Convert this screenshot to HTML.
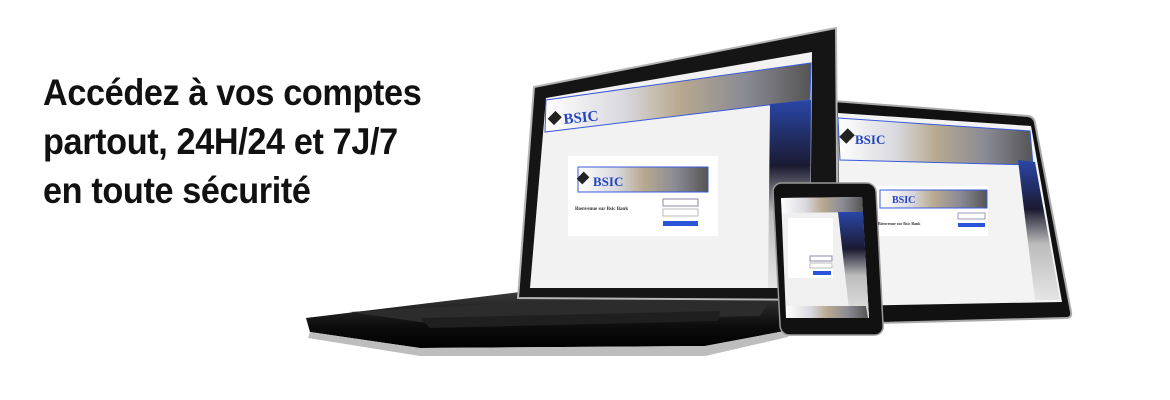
<!DOCTYPE html>
<html><head><meta charset="utf-8"><style>
html,body{margin:0;padding:0;background:#fff;width:1170px;height:400px;overflow:hidden}
h1{position:absolute;left:43px;top:68px;margin:0;font-family:"Liberation Sans",Arial,sans-serif;font-weight:bold;font-size:37px;line-height:49px;color:#111;letter-spacing:-0.4px;transform:scaleX(0.925);transform-origin:0 0;white-space:nowrap}
svg{position:absolute;left:0;top:0}
svg text{font-family:"Liberation Serif",serif;font-weight:bold}
</style></head><body>
<h1>Accédez à vos comptes<br>partout, 24H/24 et 7J/7<br>en toute sécurité</h1>
<svg width="1170" height="400" viewBox="0 0 1170 400">
<defs>
<linearGradient id="base" x1="0" y1="0" x2="0" y2="1"><stop offset="0" stop-color="#3a3a3a"/><stop offset="0.6" stop-color="#0d0d0d"/><stop offset="1" stop-color="#000"/></linearGradient>
<linearGradient id="ban" x1="0" y1="0" x2="1" y2="0"><stop offset="0" stop-color="#fff"/><stop offset="0.3" stop-color="#d8d8de"/><stop offset="0.5" stop-color="#b9aa90"/><stop offset="0.75" stop-color="#8b8b95"/><stop offset="1" stop-color="#555"/></linearGradient>
<linearGradient id="side" x1="0" y1="0" x2="0" y2="1"><stop offset="0" stop-color="#2a46a8"/><stop offset="0.35" stop-color="#1a1a30"/><stop offset="0.6" stop-color="#bcbcbc"/><stop offset="1" stop-color="#e5e5e5"/></linearGradient>
</defs>
<!-- tablet -->
<path d="M833,101 L1028,116 Q1034,117 1035,123 L1071,312 Q1072,318 1066,318 L842,324 Q836,324 836,318 Z" fill="#111" stroke="#aaa" stroke-width="2"/>
<polygon points="838,113 1031,126 1062,302 840,306" fill="#f3f3f3"/>
<polygon points="838,118 1030,131 1033,165 840,160" fill="url(#ban)" stroke="#3a5ad8" stroke-width="1"/>
<polygon points="1018,160 1035,162 1060,300 1035,300" fill="url(#side)"/>
<text x="855" y="144" font-size="13" fill="#2244c0">BSIC</text>
<rect x="842" y="130" width="10" height="12" fill="#222" transform="rotate(45 847 136)"/>
<rect x="876" y="186" width="112" height="50" fill="#fff"/>
<rect x="880" y="190" width="107" height="18" fill="url(#ban)" stroke="#3a5ad8"/>
<text x="892" y="203" font-size="10" fill="#2244c0">BSIC</text>
<rect x="958" y="223" width="27" height="4" fill="#2a55d8"/>
<rect x="958" y="213" width="27" height="6" fill="#fff" stroke="#99b"/>
<text x="878" y="225" font-size="4" fill="#333">Bienvenue sur Bsic Bank</text>
<!-- laptop base -->
<polygon points="306,318 520,292 830,292 790,330 705,346 420,348 310,332" fill="url(#base)"/>
<polygon points="310,332 420,348 705,346 790,330 788,337 705,356 420,356 308,338" fill="#bdbdbd"/>
<polygon points="350,312 560,300 770,300 760,316 420,322" fill="#2c2c2c"/>
<polygon points="420,318 720,311 718,321 430,328" fill="#1f1f1f"/>
<!-- laptop lid -->
<polygon points="534,87 836,28 838,300 518,298" fill="#151515" stroke="#b5b5b5" stroke-width="2"/>
<polygon points="546,98 812,52 810,288 530,288" fill="#f2f2f2"/>
<polygon points="546,100 811,63 810,100 545,132" fill="url(#ban)" stroke="#3a5ad8" stroke-width="1"/>
<polygon points="770,104 811,100 810,288 768,288" fill="url(#side)"/>
<text x="564" y="124" font-size="15" fill="#2244c0" transform="rotate(-6 564 124)">BSIC</text>
<rect x="550" y="112" width="9" height="11" fill="#222" transform="rotate(45 554 118)"/>
<rect x="568" y="156" width="150" height="80" fill="#fff"/>
<rect x="578" y="167" width="130" height="25" fill="url(#ban)" stroke="#3a5ad8"/>
<text x="593" y="186" font-size="13" fill="#2244c0">BSIC</text>
<rect x="579" y="173" width="8" height="10" fill="#222" transform="rotate(45 583 178)"/>
<text x="575" y="210" font-size="5" fill="#333">Bienvenue sur Bsic Bank</text>
<rect x="663" y="199" width="35" height="7" fill="#fff" stroke="#88a"/>
<rect x="663" y="209" width="35" height="7" fill="#fff" stroke="#bbb"/>
<rect x="663" y="221" width="35" height="5" fill="#2a55d8"/>
<!-- phone -->
<rect x="775" y="183" width="103" height="152" rx="9" fill="#111" stroke="#999" stroke-width="1.5" transform="skewX(3) translate(-12 0)"/>
<polygon points="781,198 862,197 869,318 786,318" fill="#f0f0f0"/>
<polygon points="781,198 862,197 863,212 782,213" fill="url(#ban)"/>
<polygon points="838,212 863,212 869,318 850,318" fill="url(#side)"/>
<rect x="788" y="218" width="45" height="60" fill="#fff"/>
<rect x="810" y="256" width="22" height="5" fill="#fff" stroke="#88a"/>
<rect x="810" y="263" width="22" height="5" fill="#fff" stroke="#bbb"/>
<rect x="813" y="271" width="18" height="4" fill="#2a55d8"/>
<polygon points="786,306 866,306 868,318 786,318" fill="url(#ban)"/>
</svg>
</body></html>
